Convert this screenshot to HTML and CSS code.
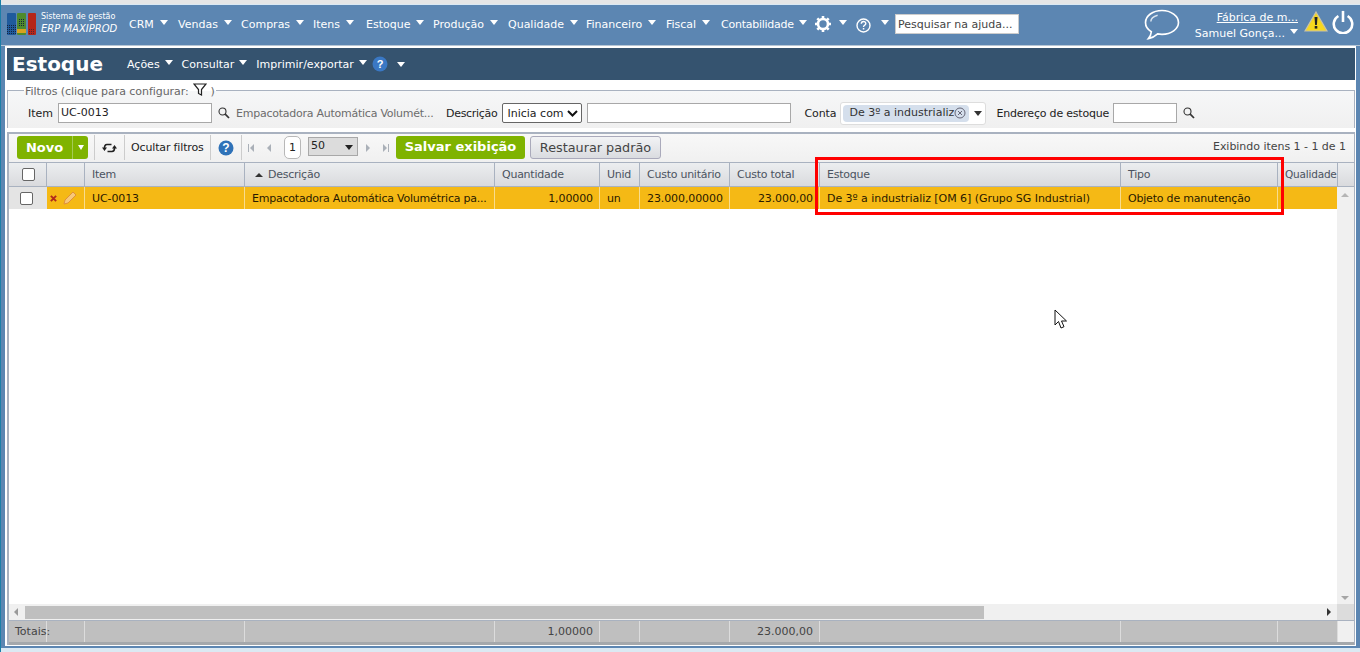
FILE: index.html
```html
<!DOCTYPE html>
<html lang="pt-BR">
<head>
<meta charset="utf-8">
<title>Estoque</title>
<link rel="stylesheet" href="styles.css">
</head>
<body>
<div class="frame">
<header class="topbar">
  <div class="logo">
    <svg width="29" height="22" viewBox="0 0 29 22">
      <defs>
        <pattern id="dots" width="2" height="2" patternUnits="userSpaceOnUse"><rect width="1" height="1" fill="#14233f"/></pattern>
      </defs>
      <rect x="0" y="0" width="9" height="22" rx="1" fill="#1f5a9c"/>
      <rect x="10" y="0" width="9" height="22" rx="1" fill="#4f8a2c"/>
      <rect x="21" y="0" width="8" height="22" rx="1" fill="#b5261a"/>
      <rect x="10" y="16" width="9" height="4" fill="#d8a21e"/>
      <rect x="0" y="12" width="9" height="10" fill="url(#dots)"/>
      <rect x="11" y="5" width="7" height="8" fill="url(#dots)"/>
      <rect x="22" y="16" width="6" height="5" fill="url(#dots)" opacity=".6"/>
    </svg>
    <div class="logo-text"><span class="logo-top">Sistema de gestão</span><span class="logo-bottom">ERP MAXIPROD</span></div>
  </div>
  <nav class="mainnav">
    <span class="navitem">CRM<i class="caret"></i></span>
    <span class="navitem">Vendas<i class="caret"></i></span>
    <span class="navitem">Compras<i class="caret"></i></span>
    <span class="navitem">Itens<i class="caret"></i></span>
    <span class="navitem">Estoque<i class="caret"></i></span>
    <span class="navitem">Produção<i class="caret"></i></span>
    <span class="navitem">Qualidade<i class="caret"></i></span>
    <span class="navitem">Financeiro<i class="caret"></i></span>
    <span class="navitem">Fiscal<i class="caret"></i></span>
    <span class="navitem nav-tight">Contabilidade<i class="caret"></i></span>
  </nav>
  <svg class="gear" width="16" height="16" viewBox="0 0 16 16">
    <circle cx="8" cy="8" r="5" fill="none" stroke="#fff" stroke-width="2.600"/>
    <g stroke="#fff" stroke-width="2.600">
      <path d="M8 0v3M8 13v3M0 8h3M13 8h3M2.300 2.300l2.100 2.100M11.600 11.600l2.100 2.100M2.300 13.700l2.100-2.100M11.600 4.400l2.100-2.100"/>
    </g>
  </svg>
  <i class="caret caret-gear"></i>
  <svg class="helpicon" width="15" height="15" viewBox="0 0 15 15">
    <circle cx="7.500" cy="7.500" r="6.500" fill="none" stroke="#fff" stroke-width="1.400"/>
    <path d="M5.300 5.800c0-3 4.500-3 4.500-.3 0 1.700-2.300 1.700-2.300 3.400" fill="none" stroke="#fff" stroke-width="1.400"/>
    <rect x="6.800" y="10" width="1.500" height="1.500" fill="#fff"/>
  </svg>
  <i class="caret caret-help"></i>
  <div class="helpsearch">Pesquisar na ajuda...</div>
  <svg class="chat" width="36" height="32" viewBox="0 0 37 33">
    <path d="M18.500 1.500C9 1.500 1.500 7 1.500 14c0 4 2.500 7.500 6 9.500-.2 2.500-1.300 5-3 7 3.500-.5 7-2.500 9.500-4.800 1.500.3 3 .4 4.500.4 9.500 0 17-5.500 17-12.100S28 1.500 18.500 1.500z" fill="none" stroke="#fff" stroke-width="1.700"/>
    <path d="M7 13c0-3 3-5.500 7-6.500" fill="none" stroke="#dbe6f0" stroke-width="1.500"/>
  </svg>
  <div class="userbox">
    <a class="company">Fábrica de m...</a>
    <span class="user">Samuel Gonça...<i class="caret caret-user"></i></span>
  </div>
  <svg class="warn" width="24" height="21" viewBox="0 0 24 21">
    <path d="M12 1 23 20H1z" fill="#f7d81e" stroke="#c9c2a8" stroke-width="1.200"/>
    <path d="M10.500 6h3l-.6 8h-1.800z" fill="#222"/>
    <rect x="10.700" y="15" width="2.600" height="2.600" fill="#222"/>
  </svg>
  <svg class="power" width="24" height="24" viewBox="0 0 24 26">
    <path d="M7 6.500a10 10 0 1 0 10 0" fill="none" stroke="#fff" stroke-width="2.800"/>
    <path d="M12 1v12" stroke="#fff" stroke-width="2.800"/>
  </svg>
</header>

<main class="panel">
  <div class="titlebar">
    <h1 class="title">Estoque</h1>
    <span class="titlemenu menu-acoes">Ações<i class="caret"></i></span>
    <span class="titlemenu">Consultar<i class="caret"></i></span>
    <span class="titlemenu">Imprimir/exportar<i class="caret"></i></span>
    <svg class="qicon" width="16" height="16" viewBox="0 0 16 16">
      <circle cx="8" cy="8" r="7.500" fill="#3a78c4"/>
      <text x="8" y="12" font-size="11" font-weight="700" fill="#fff" text-anchor="middle" font-family="Liberation Sans, sans-serif">?</text>
    </svg>
    <i class="caret caret-title"></i>
  </div>

  <fieldset class="filters">
    <legend class="filters-legend">Filtros (clique para configurar:
      <svg class="funnel" width="14" height="13" viewBox="0 0 14 13"><path d="M1 1h12L8.500 6.500V12l-3-1.500V6.500z" fill="none" stroke="#222" stroke-width="1.200"/></svg>
      )</legend>
    <div class="filter-row">
      <span class="flabel label-item">Item</span>
      <span class="input input-item">UC-0013</span>
      <svg class="lens" width="12" height="12" viewBox="0 0 12 12"><circle cx="4.500" cy="4.500" r="3.500" fill="none" stroke="#333" stroke-width="1.100"/><path d="M7.200 7.200 11 11" stroke="#333" stroke-width="1.700"/></svg>
      <span class="itemdesc">Empacotadora Automática Volumét...</span>
      <span class="flabel label-desc">Descrição</span>
      <span class="selectbox">Inicia com
        <svg width="11" height="7" viewBox="0 0 11 7"><path d="M1 1l4.500 4.500L10 1" fill="none" stroke="#111" stroke-width="2"/></svg>
      </span>
      <span class="input input-desc"></span>
      <span class="flabel label-conta">Conta</span>
      <span class="combo"><span class="chip">De 3º a industrializ<svg class="chipx" width="12" height="12" viewBox="0 0 12 12"><circle cx="6" cy="6" r="5" fill="none" stroke="#667" stroke-width="1"/><path d="M4 4l4 4M8 4l-4 4" stroke="#667" stroke-width="1"/></svg></span><i class="caret caret-combo"></i></span>
      <span class="flabel label-end">Endereço de estoque</span>
      <span class="input input-end"></span>
      <svg class="lens" width="12" height="12" viewBox="0 0 12 12"><circle cx="4.500" cy="4.500" r="3.500" fill="none" stroke="#333" stroke-width="1.100"/><path d="M7.200 7.200 11 11" stroke="#333" stroke-width="1.700"/></svg>
    </div>
  </fieldset>

  <section class="gridbox">
    <div class="toolbar">
      <span class="btn-novo"><span class="novo-label">Novo</span><span class="novo-arrow"><i class="caret caret-white"></i></span></span>
      <span class="tsep"></span>
      <svg class="refresh" width="15" height="12" viewBox="0 0 15 12"><path d="M9.500 2.500H5C3.200 2.500 2.500 4 2.500 6M5.500 9.500H10c1.800 0 2.500-1.500 2.500-3.500" fill="none" stroke="#222" stroke-width="1.600"/><path d="M0 5.500h5L2.500 9zM10 6.500h5L12.500 3z" fill="#222"/></svg>
      <span class="tsep"></span>
      <span class="toggle">Ocultar filtros</span>
      <span class="tsep"></span>
      <svg class="qbig" width="16" height="16" viewBox="0 0 16 16"><circle cx="8" cy="8" r="7.500" fill="#2f72b8"/><text x="8" y="12.300" font-size="12" font-weight="700" fill="#fff" text-anchor="middle" font-family="Liberation Sans, sans-serif">?</text></svg>
      <span class="tsep"></span>
      <span class="pager-ico first"></span>
      <span class="pager-ico prev"></span>
      <span class="pagenum">1</span>
      <span class="pagesize">50<i class="caret caret-dark"></i></span>
      <span class="pager-ico next"></span>
      <span class="pager-ico last"></span>
      <span class="btn-save">Salvar exibição</span>
      <span class="btn-restore">Restaurar padrão</span>
      <span class="count">Exibindo itens 1 - 1 de 1</span>
    </div>

    <div class="cols head">
      <span class="c center"><span class="check check-head"></span></span>
      <span class="c"></span>
      <span class="c">Item</span>
      <span class="c th-sort"><i class="sort"></i>Descrição</span>
      <span class="c">Quantidade</span>
      <span class="c">Unid</span>
      <span class="c">Custo unitário</span>
      <span class="c">Custo total</span>
      <span class="c">Estoque</span>
      <span class="c">Tipo</span>
      <span class="c tight">Qualidade</span>
      <span class="c last-head"></span>
    </div>

    <div class="gridbody">
      <div class="rows">
        <div class="cols datarow">
          <span class="c center rowhead"><span class="check check-row"></span></span>
          <span class="c icons">
            <svg width="7" height="7" viewBox="0 0 8 8"><path d="M1 1l6 6M7 1 1 7" stroke="#b02a1c" stroke-width="2.200"/></svg>
            <svg class="pencil" width="14" height="14" viewBox="0 0 14 14"><path d="M1 13l1-4L10 1l3 3-8 8z" fill="#f7c87a" stroke="#e0903a" stroke-width="1"/></svg>
          </span>
          <span class="c">UC-0013</span>
          <span class="c cell-desc">Empacotadora Automática Volumétrica pa...</span>
          <span class="c right">1,00000</span>
          <span class="c">un</span>
          <span class="c right cell-unit">23.000,00000</span>
          <span class="c right cell-total">23.000,00</span>
          <span class="c cell-estoque">De 3º a industrializ [OM 6] (Grupo SG Industrial)</span>
          <span class="c cell-tipo">Objeto de manutenção</span>
          <span class="c"></span>
        </div>
      </div>
      <div class="vscroll"><i class="arrow-up"></i><i class="arrow-down"></i></div>
    </div>

    <div class="hscroll">
      <i class="arrow-left"></i>
      <div class="hthumb-track"><div class="hthumb"></div></div>
      <i class="arrow-right"></i>
      <span class="hcorner"></span>
    </div>

    <div class="cols totals">
      <span class="c totals-label">Totais:</span>
      <span class="c"></span>
      <span class="c"></span>
      <span class="c right"></span>
      <span class="c right">1,00000</span>
      <span class="c"></span>
      <span class="c"></span>
      <span class="c right cell-total">23.000,00</span>
      <span class="c"></span>
      <span class="c"></span>
      <span class="c"></span>
      <span class="totals-end"></span>
    </div>
  </section>
</main>
</div>

<div class="redbox"></div>
<svg class="cursor" width="14" height="21" viewBox="0 0 14 21">
  <path d="M1 1v15l3.500-3.500L7 19l3-1.300-2.500-5.700H12.500z" fill="#fff" stroke="#111" stroke-width="1"/>
</svg>
</body>
</html>
```
FILE: styles.css
```css
* { box-sizing: border-box; }
html, body { height: 100%; }
body {
  margin: 0;
  width: 1360px;
  height: 652px;
  overflow: hidden;
  position: relative;
  display: flex;
  flex-direction: column;
  padding: 5px 0 4px 1px;
  background: #dbe9f3;
  font-family: "DejaVu Sans", sans-serif;
  font-size: 11px;
  color: #222;
  box-shadow: inset 1px 0 0 #1a7fa8, inset 0 4px 0 #e6e6e6;
}

i { display: inline-block; font-style: normal; }

.caret {
  display: inline-block;
  width: 0;
  height: 0;
  border-left: 4.5px solid transparent;
  border-right: 4.5px solid transparent;
  border-top: 5px solid #fff;
  margin-left: 5px;
  vertical-align: 3px;
}

.frame {
  flex: 1;
  min-height: 0;
  display: flex;
  flex-direction: column;
  background: #5c86b2;
}

/* top bar */
.topbar {
  height: 41px;
  background: #5c86b2;
  border-bottom: 1px solid #b6c6d6;
  display: flex;
  align-items: center;
  color: #fff;
  padding-left: 6px;
  flex: none;
}
.logo { display: flex; align-items: center; width: 122px; flex: none; margin-top: -3px; }
.logo svg { flex: none; }
.logo-text { display: flex; flex-direction: column; margin-left: 5px; line-height: 12px; margin-top: -2px; }
.logo-top { font-size: 8px; font-weight: 400; white-space: nowrap; }
.logo-bottom { font-size: 10px; font-style: italic; white-space: nowrap; }
.mainnav { display: grid; grid-template-columns: 49px 63px 72px 53px 67px 75px 78px 80px 55px 94px; flex: none; margin-top: -2px; }
.navitem { white-space: nowrap; font-size: 11px; }
.navitem .caret { margin-left: 6px; }
.nav-tight { letter-spacing: -.25px; }
.nav-tight .caret { margin-left: 5px; }
.gear { margin-top: -3px; flex: none; }
.caret-gear { margin-left: 8px; margin-top: -6px; flex: none; }
.helpicon { margin-left: 9px; flex: none; }
.caret-help { margin-left: 10px; margin-top: -6px; flex: none; }
.helpsearch {
  margin-left: 6px;
  width: 124px;
  height: 20px;
  background: #fff;
  color: #444;
  padding: 0 0 0 2px;
  line-height: 19px;
  white-space: nowrap;
  overflow: hidden;
  margin-top: -3px;
  border: 1px solid #ccc;
  flex: none;
}
.chat { margin-left: 125px; flex: none; }
.userbox { width: 110px; margin-left: 14px; margin-top: 2px; display: flex; flex-direction: column; align-items: flex-end; line-height: 16px; flex: none; white-space: nowrap; }
.company { text-decoration: underline; margin-right: 6px; }
.user { margin-right: 6px; }
.caret-user { margin-left: 5px; }
.warn { flex: none; margin-top: -7px; }
.power { margin-left: 3px; flex: none; margin-top: -6px; }

/* panel */
.panel {
  flex: 1;
  min-height: 0;
  margin: 0 4px 2px 4px;
  border-style: solid;
  border-color: #fff;
  border-width: 2px 1px 1px 2px;
  background: #fff;
  display: flex;
  flex-direction: column;
}
.titlebar {
  height: 32px;
  background: #35536f;
  color: #fff;
  display: flex;
  align-items: center;
  flex: none;
}
.title { margin: 0 0 0 5px; font-size: 20px; font-weight: 700; font-family: "DejaVu Sans", sans-serif; width: 115px; flex: none; }
.titlemenu { margin-right: 9px; white-space: nowrap; }
.qicon { margin-left: -4px; flex: none; }
.caret-title { margin-left: 9px; }

.filters {
  flex: none;
  margin: 3px 0 0 0;
  padding: 0;
  height: 45px;
  border: 1px solid #a9b2c0;
  border-bottom: 0;
  background: linear-gradient(#f6f7f8, #f0f0f0);
  min-width: 0;
}
.filters-legend { margin-left: 16px; padding: 0 1px; color: #666; white-space: nowrap; line-height: 13px; font-size: 11px; letter-spacing: -.05px; }
.funnel { vertical-align: -1px; margin-left: 1px; }
.filter-row { display: flex; align-items: center; height: 26px; margin-top: 2px; white-space: nowrap; }
.flabel { color: #222; flex: none; }
.label-item { margin-left: 20px; }
.input { display: block; background: #fff; border: 1px solid #a8a8a8; height: 20px; flex: none; line-height: 17px; padding-left: 2px; color: #222; }
.input-item { width: 154px; margin-left: 5px; }
.filter-row .lens { flex: none; margin-left: 6px; }
.itemdesc { color: #6c6c6c; margin-left: 6px; width: 210px; flex: none; letter-spacing: -.25px; }
.label-desc { letter-spacing: -.3px; }
.selectbox { display: flex; align-items: center; justify-content: space-between; width: 80px; height: 20px; background: #fff; border: 1px solid #666; border-radius: 2px; margin-left: 5px; padding: 0 3px 0 4px; flex: none; }
.input-desc { width: 204px; margin-left: 5px; }
.label-conta { margin-left: 13px; letter-spacing: -.1px; }
.combo { display: flex; align-items: center; width: 146px; height: 23px; margin-left: 4px; border: 1px solid #ddd; border-radius: 3px; background: #fff; flex: none; padding-left: 2px; }
.chip { background: #d5dfec; border-radius: 4px; height: 17px; line-height: 16px; padding-left: 6px; color: #333; display: flex; align-items: center; width: 126px; flex: none; }
.chipx { flex: none; }
.caret-combo { border-top-color: #333; margin-left: 5px; vertical-align: 0; border-left-width: 4px; border-right-width: 4px; }
.label-end { margin-left: 10px; letter-spacing: -.2px; }
.input-end { width: 64px; margin-left: 4px; }

/* grid */
.gridbox {
  flex: 1;
  min-height: 0;
  margin-top: 4px;
  border-top: 2px solid #a9b2c0;
  border-left: 2px solid #a9b2c0;
  border-right: 1px solid #a9b2c0;
  display: flex;
  flex-direction: column;
  background: #fff;
}
.toolbar {
  height: 28px;
  flex: none;
  display: flex;
  align-items: center;
  background: linear-gradient(#f8f8f8, #f0f0f0);
  padding-left: 8px;
  padding-bottom: 1px;
  white-space: nowrap;
}
.btn-novo { display: flex; width: 71px; height: 23px; background: #7fb300; border-radius: 3px; color: #fff; font-weight: 700; font-size: 13px; flex: none; align-items: center; }
.novo-label { width: 55px; text-align: center; }
.novo-arrow { flex: 1; height: 100%; border-left: 1px solid #a4cb55; display: flex; align-items: center; justify-content: center; }
.caret-white { margin: 0; border-left-width: 3.5px; border-right-width: 3.5px; }
.tsep { width: 1px; height: 25px; background: #ccc; flex: none; }
.btn-novo + .tsep { margin-left: 6px; }
.refresh { margin: 0 7px; flex: none; }
.toggle { margin: 0 6px; width: 73px; flex: none; letter-spacing: -.15px; }
.qbig { margin: 0 7px; flex: none; }
.pager-ico { width: 11px; height: 10px; flex: none; position: relative; }
.pager-ico::after { content: ""; position: absolute; top: 1px; border-top: 4px solid transparent; border-bottom: 4px solid transparent; }
.first { margin-left: 5px; }
.first::before { content: ""; position: absolute; left: 1px; top: 1px; width: 1px; height: 8px; background: #aab0b8; }
.first::after, .prev::after { left: 3px; border-right: 4px solid #aab0b8; }
.prev { margin-left: 6px; }
.next::after, .last::after { left: 3px; border-left: 4px solid #aab0b8; }
.last::before { content: ""; position: absolute; left: 8px; top: 1px; width: 1px; height: 8px; background: #aab0b8; }
.pagenum { width: 17px; height: 23px; border: 1px solid #b8b8b8; border-radius: 5px; background: #fff; text-align: center; line-height: 21px; margin-left: 9px; flex: none; }
.pagesize { width: 50px; height: 19px; background: #dcdcdc; border: 1px solid #a8a8a8; margin-left: 7px; padding-left: 2px; line-height: 15px; position: relative; flex: none; margin-top: -3px; }
.caret-dark { position: absolute; right: 4px; top: 7px; border-top-color: #222; margin: 0; }
.next { margin-left: 5px; }
.last { margin-left: 6px; }
.btn-save { width: 129px; height: 23px; line-height: 22px; background: #7fb300; color: #fff; font-weight: 700; font-size: 13px; border-radius: 3px; text-align: center; margin-left: 5px; flex: none; overflow: hidden; }
.btn-restore { width: 131px; height: 23px; line-height: 21px; border: 1px solid #aab; border-radius: 3px; background: linear-gradient(#f2f3f5, #dadce0); color: #444; font-size: 12.8px; text-align: center; margin-left: 5px; flex: none; overflow: hidden; }
.count { margin-left: auto; margin-right: 8px; color: #444; margin-top: -3px; letter-spacing: -.03px; }

.cols {
  display: grid;
  grid-template-columns: 38px 38px 160px 250px 105px 40px 90px 90px 301px 157px 60px 1fr;
  flex: none;
}
.c { padding-left: 7px; padding-right: 6px; white-space: nowrap; overflow: hidden; border-right: 1px solid #e8e8e8; }
.head { height: 25px; background: linear-gradient(#eceef0, #d9dadd); border-top: 1px solid #a9b2c0; border-bottom: 1px solid #a9b2c0; color: #4b5360; line-height: 23px; letter-spacing: -.25px; }
.head .c { border-right: 1px solid #a9b2c0; }
.head .tight { padding: 0 0 0 7px; font-size: 10.5px; letter-spacing: -.2px; }
.head .th-sort { padding-left: 10px; }
.last-head { border-right: 0 !important; }
.center { display: flex; align-items: center; justify-content: center; padding: 0; }
.check { width: 13px; height: 13px; border: 1px solid #666; border-radius: 2px; background: #fff; display: block; }
.check-head { margin-left: 2px; }
.sort { width: 0; height: 0; border-left: 4px solid transparent; border-right: 4px solid transparent; border-bottom: 4px solid #333; margin-right: 5px; vertical-align: 1px; }

.gridbody { flex: 1; min-height: 0; display: flex; }
.rows { flex: 1; min-width: 0; }
.datarow { height: 22px; line-height: 23px; background: #f5b915; color: #2a1a00; letter-spacing: -.1px; grid-template-columns: 38px 38px 160px 250px 105px 40px 90px 90px 301px 157px 60px; }
.datarow .c { border-right: 1px solid #f8dc8f; }
.cell-desc { letter-spacing: -.22px; }
.cell-unit { padding-right: 7px; }
.cell-estoque { letter-spacing: -.05px; }
.cell-tipo { letter-spacing: -.2px; }
.rowhead { background: #e4e4e4; border-right: 0 !important; }
.check-row { margin-left: -3px; }
.icons { display: flex; align-items: center; padding: 0 0 0 3px; }
.pencil { margin-left: 6px; }
.right { text-align: right; }
.vscroll { width: 17px; flex: none; background: #f0f0f0; position: relative; }
.arrow-up, .arrow-down { position: absolute; left: 4px; width: 0; height: 0; border-left: 4px solid transparent; border-right: 4px solid transparent; }
.arrow-up { top: 6px; border-bottom: 4px solid #b5b5b5; }
.arrow-down { bottom: 4px; border-top: 4px solid #a5a5a5; }

.hscroll { height: 17px; flex: none; display: flex; align-items: center; background: #f0f0f0; border-bottom: 1px solid #a9b2c0; }
.arrow-left { width: 0; height: 0; border-top: 4px solid transparent; border-bottom: 4px solid transparent; border-right: 4px solid #9a9a9a; margin-left: 5px; flex: none; }
.hthumb-track { width: 1301px; height: 13px; margin-left: 7px; flex: none; }
.hthumb { width: 959px; height: 100%; background: #bfbfbf; }
.arrow-right { width: 0; height: 0; border-top: 4px solid transparent; border-bottom: 4px solid transparent; border-left: 4px solid #333; margin-left: 1px; flex: none; }
.hcorner { width: 17px; height: 100%; background: #dcdcdc; margin-left: auto; flex: none; }

.totals { height: 24px; background: #bfbfbf; border-bottom: 3px solid #a4a8ac; line-height: 21px; color: #444; }
.totals .c { border-right: 1px solid #dcdcdc; }
.totals .totals-label { overflow: visible; padding-left: 6px; }
.totals-end { background: #f0f0f0; }

/* overlays */
.redbox {
  position: absolute;
  left: 815px;
  top: 157px;
  width: 469px;
  height: 58px;
  border: 3px solid #f00;
  pointer-events: none;
}
.cursor { position: absolute; left: 1054px; top: 309px; }
```
